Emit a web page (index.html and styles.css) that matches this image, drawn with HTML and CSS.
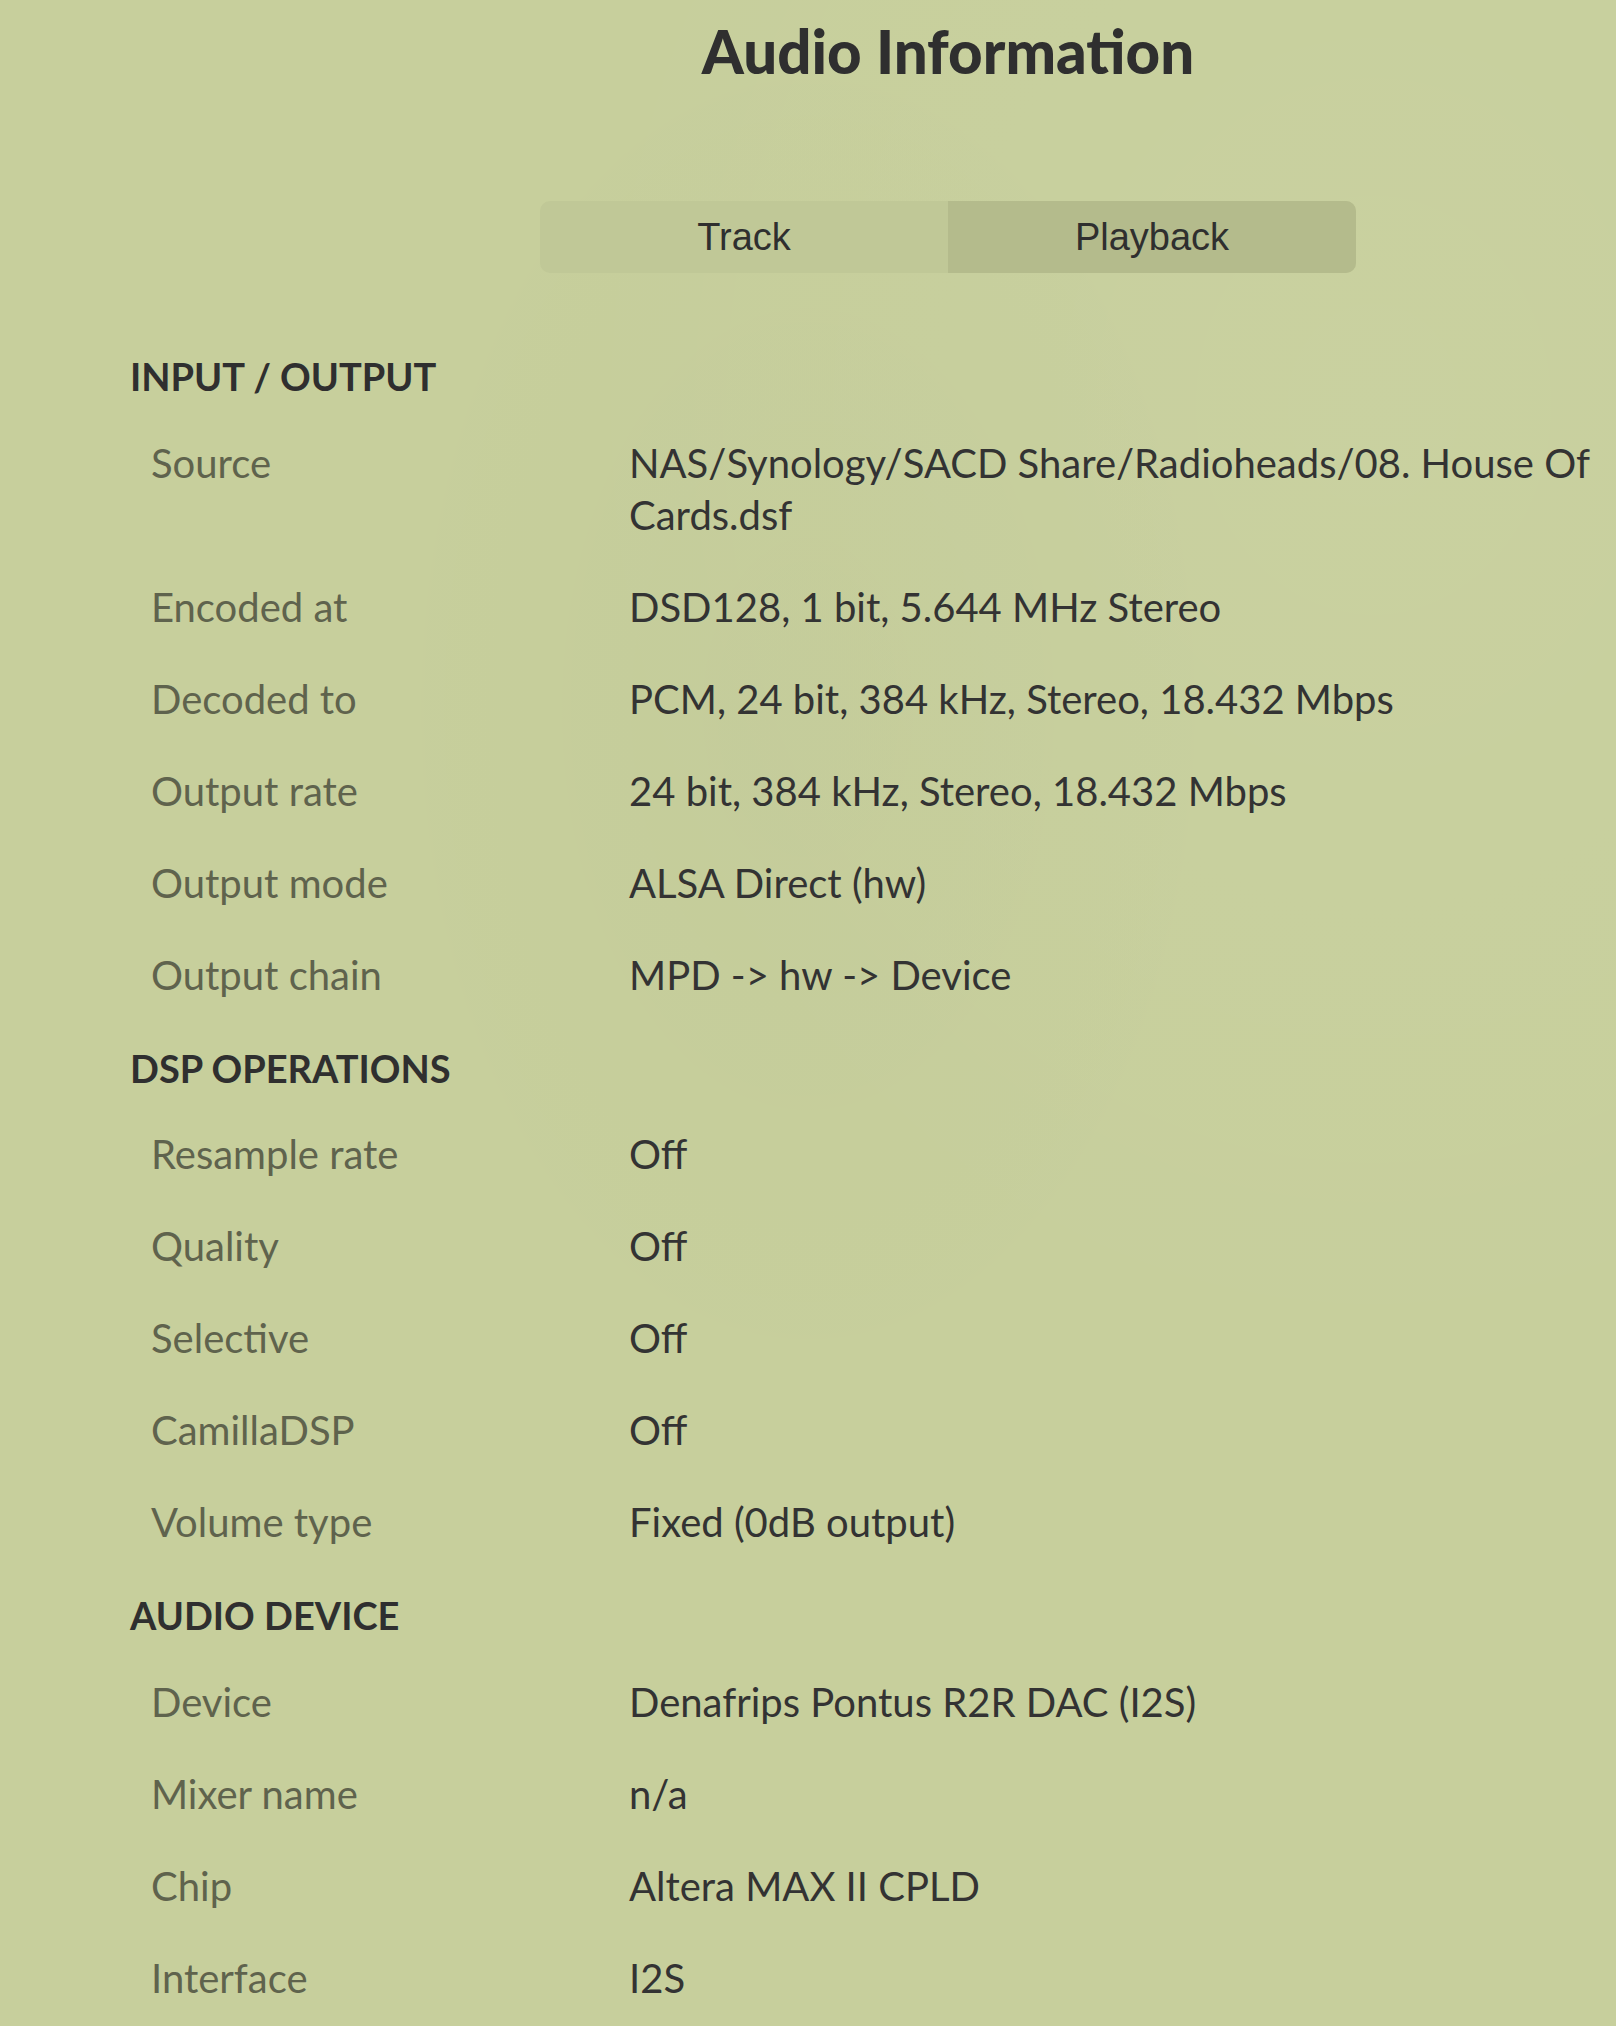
FILE: index.html
```html
<!DOCTYPE html>
<html lang="en">
<head>
    <meta charset="UTF-8">
    <meta name="viewport" content="width=device-width, initial-scale=1.0">
    <title>Audio Information</title>
    <link rel="stylesheet" href="styles.css">
</head>
<body>
    <div class="modal">
        <div class="modal-header">
            <h1 class="modal-title">Audio Information</h1>

            <div class="tabs">
                <button class="tab-btn">Track</button>
                <button class="tab-btn active">Playback</button>
            </div>
        </div>

        <div class="info">
            <h2 class="section-title">INPUT / OUTPUT</h2>
            <div class="info-row">
                <div class="info-label">Source</div>
                <div class="info-value">NAS/Synology/SACD Share/Radioheads/08. House Of Cards.dsf</div>
            </div>
            <div class="info-row">
                <div class="info-label">Encoded at</div>
                <div class="info-value">DSD128, 1 bit, 5.644 MHz Stereo</div>
            </div>
            <div class="info-row">
                <div class="info-label">Decoded to</div>
                <div class="info-value">PCM, 24 bit, 384 kHz, Stereo, 18.432 Mbps</div>
            </div>
            <div class="info-row">
                <div class="info-label">Output rate</div>
                <div class="info-value">24 bit, 384 kHz, Stereo, 18.432 Mbps</div>
            </div>
            <div class="info-row">
                <div class="info-label">Output mode</div>
                <div class="info-value">ALSA Direct (hw)</div>
            </div>
            <div class="info-row">
                <div class="info-label">Output chain</div>
                <div class="info-value">MPD -&gt; hw -&gt; Device</div>
            </div>

            <h2 class="section-title">DSP OPERATIONS</h2>
            <div class="info-row">
                <div class="info-label">Resample rate</div>
                <div class="info-value">Off</div>
            </div>
            <div class="info-row">
                <div class="info-label">Quality</div>
                <div class="info-value">Off</div>
            </div>
            <div class="info-row">
                <div class="info-label">Selective</div>
                <div class="info-value">Off</div>
            </div>
            <div class="info-row">
                <div class="info-label">CamillaDSP</div>
                <div class="info-value">Off</div>
            </div>
            <div class="info-row">
                <div class="info-label">Volume type</div>
                <div class="info-value">Fixed (0dB output)</div>
            </div>

            <h2 class="section-title">AUDIO DEVICE</h2>
            <div class="info-row">
                <div class="info-label">Device</div>
                <div class="info-value">Denafrips Pontus R2R DAC (I2S)</div>
            </div>
            <div class="info-row">
                <div class="info-label">Mixer name</div>
                <div class="info-value">n/a</div>
            </div>
            <div class="info-row">
                <div class="info-label">Chip</div>
                <div class="info-value">Altera MAX II CPLD</div>
            </div>
            <div class="info-row">
                <div class="info-label">Interface</div>
                <div class="info-value">I2S</div>
            </div>
        </div>
    </div>
</body>
</html>
```

FILE: styles.css
```css
/* Audio info modal */
:root {
    --bg-color: #c7cf9c;
    --tab-bg: #c0c897;
    --tab-active: #b4bb8c;
    --text-color: #333333;
    --label-color: #5f634d;
}

html, body {
    margin: 0;
    padding: 0;
}

body {
    background-color: var(--bg-color);
    background-image:
        radial-gradient(ellipse at 85% 20%, rgba(255, 255, 255, 0.04), transparent 45%),
        radial-gradient(ellipse at 50% 35%, rgba(0, 0, 0, 0.015), transparent 40%);
    color: var(--text-color);
    font-family: 'Lato', 'Noto Sans', sans-serif;
    overflow: hidden;
    height: 2026px;
}

.modal {
    padding-top: 15px;
}

.modal-header {
    padding-left: 280px;
    padding-bottom: 80px;
}

.modal-title {
    margin: 0;
    text-align: center;
    font-size: 60px;
    line-height: 72px;
    font-weight: 900;
    color: #2f2f2f;
}

.tabs {
    display: flex;
    width: 816px;
    height: 72px;
    margin: 114px auto 0;
    border-radius: 10px;
    overflow: hidden;
    background-color: var(--tab-bg);
}

.tab-btn {
    flex: 1;
    border: none;
    background: transparent;
    color: #2f2f2f;
    font-family: 'Liberation Sans', Arial, sans-serif;
    font-size: 38px;
    padding: 0;
    cursor: pointer;
}

.tab-btn.active {
    background-color: var(--tab-active);
}

.info {
    padding-left: 130px;
    width: 1470px;
}

.section-title {
    margin: 24px 0 17.5px;
    font-size: 38px;
    line-height: 46px;
    font-weight: 700;
    color: #2f2f2f;
}

.info .section-title:first-child {
    margin-top: 0;
}

.info-row {
    display: flex;
    padding: 20px 0;
    font-size: 40px;
    line-height: 52px;
}

.info-label {
    width: 478px;
    flex-shrink: 0;
    padding-left: 21px;
    color: var(--label-color);
}

.info-value {
    flex: 1;
    color: var(--text-color);
}
```
